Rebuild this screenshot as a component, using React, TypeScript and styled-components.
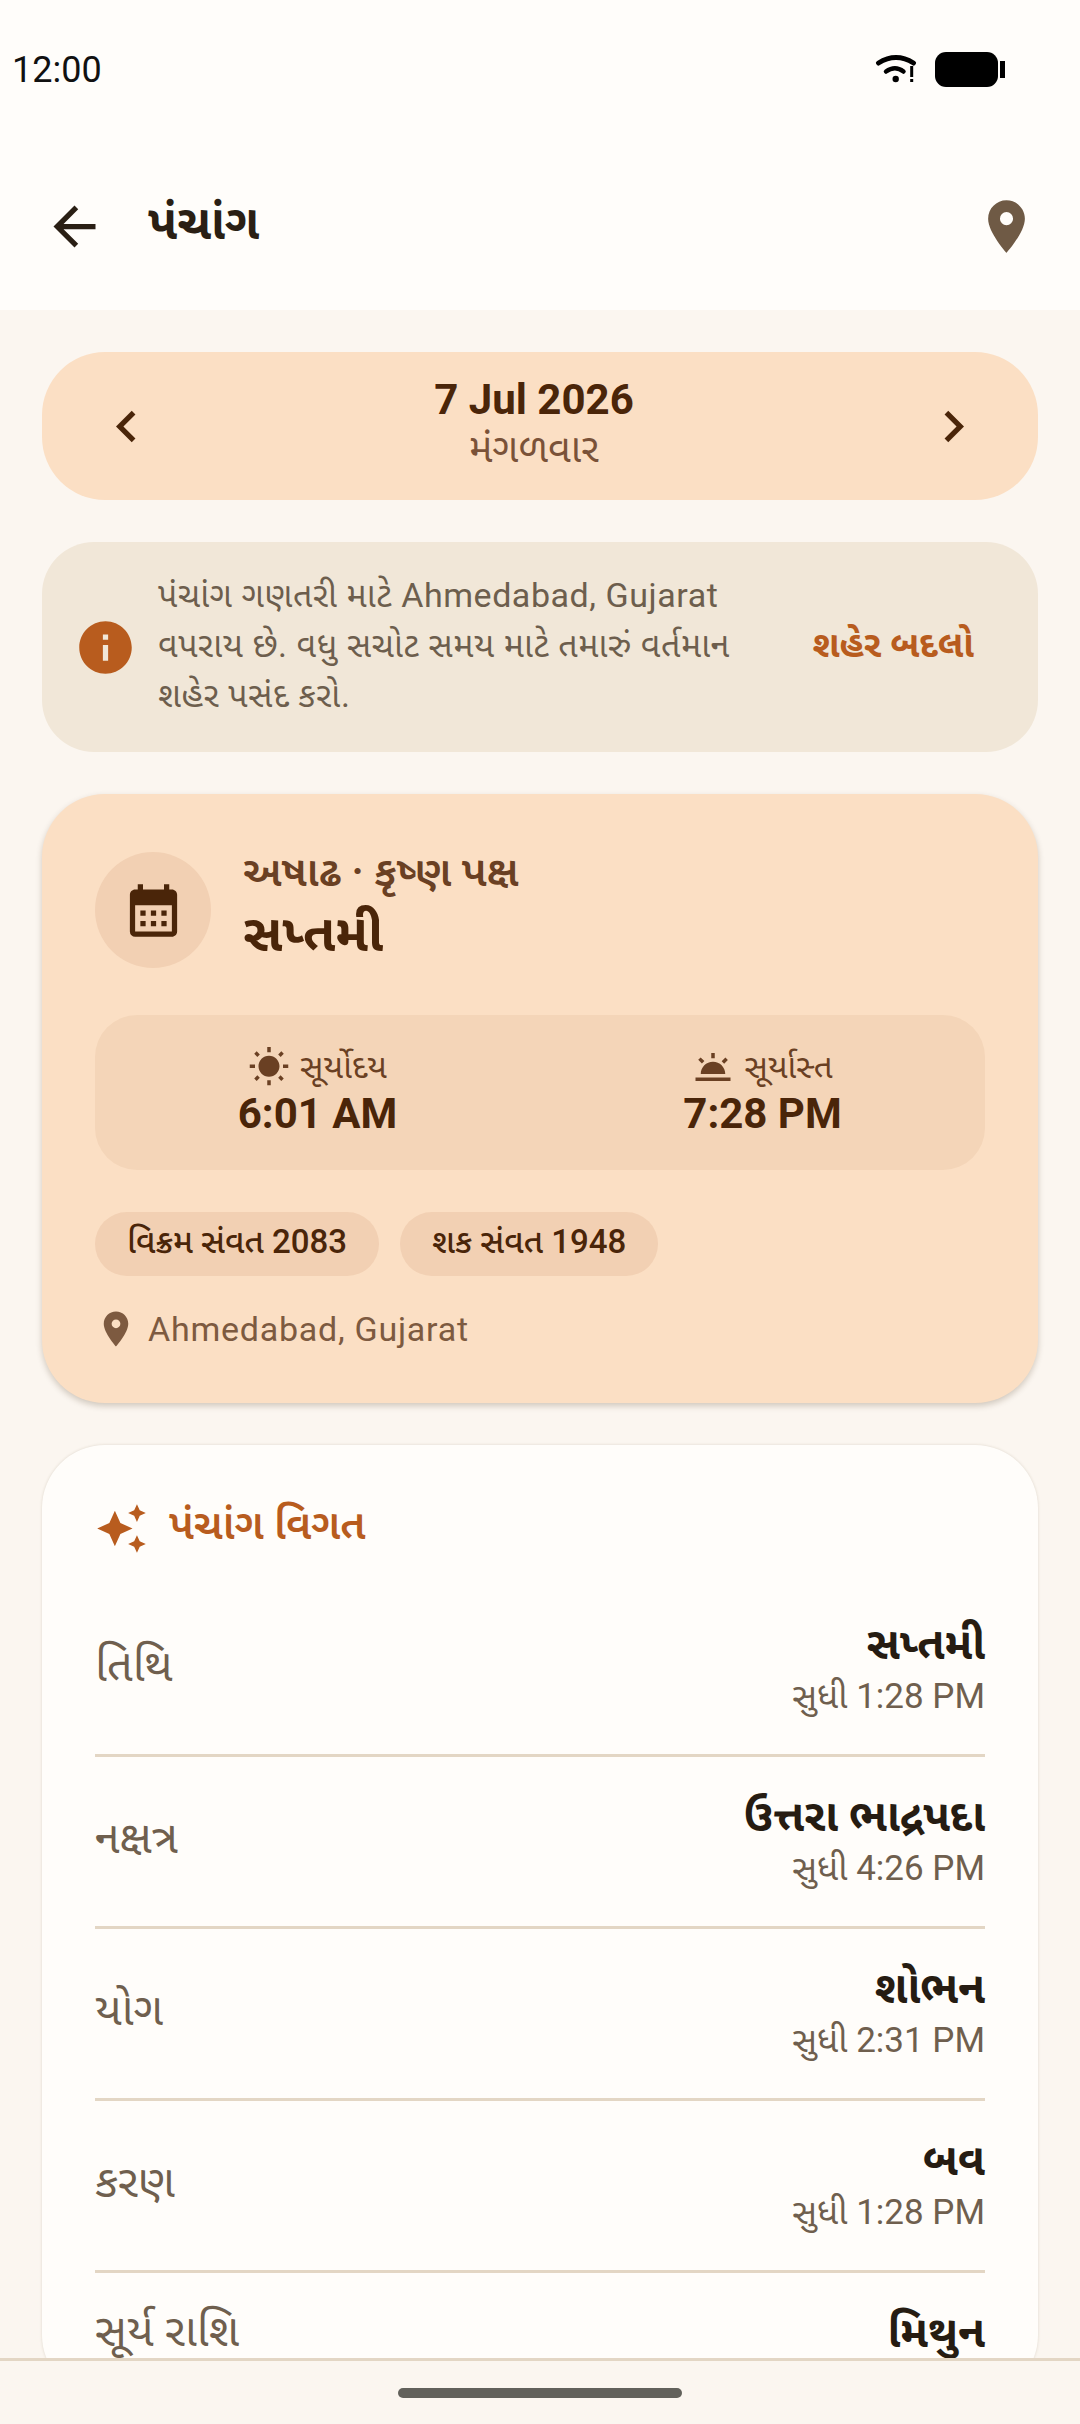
import React from 'react';
import styled, { createGlobalStyle } from 'styled-components';
import {
  MdArrowBack,
  MdLocationOn,
  MdChevronLeft,
  MdChevronRight,
  MdInfo,
  MdCalendarMonth,
  MdWbSunny,
  MdWbTwilight,
  MdAutoAwesome,
} from 'react-icons/md';

const FONT = `Roboto, "Noto Sans Gujarati", "Noto Sans", sans-serif`;

const GlobalStyle = createGlobalStyle`
  html, body {
    margin: 0;
    padding: 0;
    background: #fbf6f0;
    font-family: ${FONT};
  }
  * { box-sizing: border-box; }
`;

const Screen = styled.div`
  width: 1080px;
  height: 2424px;
  display: flex;
  flex-direction: column;
  overflow: hidden;
  background: #fbf6f0;
`;

const TopArea = styled.header`
  background: #fffdfa;
  height: 310px;
  flex: none;
`;

const StatusBar = styled.div`
  height: 142px;
  display: flex;
  align-items: flex-start;
  justify-content: space-between;
  padding: 50px 75px 0 12px;
`;

const Clock = styled.span`
  font-size: 36px;
  line-height: 40px;
  color: #111;
`;

const StatusIcons = styled.div`
  display: flex;
  align-items: flex-start;
  gap: 18px;
  margin-top: 2px;
`;

const AppBar = styled.div`
  height: 168px;
  display: flex;
  align-items: center;
  padding: 0 42px 0 43px;
`;

const BackIcon = styled(MdArrowBack)`
  width: 63px;
  height: 63px;
  color: #2a1f14;
  flex: none;
`;

const Title = styled.h1`
  margin: 0 0 0 42px;
  flex: 1;
  font-size: 48px;
  font-weight: 700;
  color: #2a1f14;
`;

const PinIcon = styled(MdLocationOn)`
  width: 63px;
  height: 63px;
  color: #6f5a45;
`;

const Content = styled.main`
  flex: 1;
  min-height: 0;
  overflow: hidden;
  padding: 42px;
  display: flex;
  flex-direction: column;
  gap: 42px;
`;

const DateCard = styled.section`
  flex: none;
  height: 148px;
  border-radius: 63px;
  background: #fbdfc4;
  display: flex;
  align-items: center;
  justify-content: space-between;
  padding: 0 53px;
`;

const Chevron = styled.span`
  display: flex;
  font-size: 63px;
  color: #4a2509;
`;

const DateText = styled.div`
  display: flex;
  flex-direction: column;
  align-items: center;
  margin-right: 12px;
  padding-bottom: 8px;
`;

const DateMain = styled.div`
  font-size: 42px;
  line-height: 52px;
  font-weight: 700;
  color: #4a2509;
`;

const DateSub = styled.div`
  margin-top: 1px;
  font-size: 39.5px;
  line-height: 44px;
  color: #7a5238;
`;

const InfoCard = styled.section`
  flex: none;
  height: 210px;
  border-radius: 52px;
  background: #f1e7d8;
  display: flex;
  align-items: center;
  padding: 0 42px 0 32px;
`;

const InfoIcon = styled(MdInfo)`
  width: 63px;
  height: 63px;
  color: #b85c1e;
  flex: none;
`;

const InfoText = styled.p`
  margin: 0 0 5px 21px;
  width: 600px;
  font-size: 34px;
  letter-spacing: 0.55px;
  line-height: 50px;
  color: #6d5e4d;
`;

const InfoAction = styled.span`
  margin-left: auto;
  margin-right: 22px;
  font-size: 36.5px;
  font-weight: 700;
  color: #b85c1e;
`;

const HeroCard = styled.section`
  flex: none;
  height: 609px;
  border-radius: 63px;
  background: #fbdfc4;
  padding: 58px 53px 0;
  box-shadow: 0 3px 6px rgba(60, 35, 10, 0.22);
`;

const HeroHead = styled.div`
  height: 116px;
  display: flex;
  align-items: center;
  gap: 32px;
`;

const HeroBadge = styled.div`
  width: 116px;
  height: 116px;
  border-radius: 50%;
  background: #f2d0b3;
  display: flex;
  align-items: center;
  justify-content: center;
  font-size: 63px;
  color: #4a2509;
`;

const HeroTitles = styled.div`
  padding-bottom: 6px;
`;

const HeroEyebrow = styled.div`
  font-size: 42px;
  line-height: 46px;
  font-weight: 600;
  color: #6a4023;
`;

const HeroName = styled.div`
  margin-top: 8px;
  font-size: 52px;
  line-height: 62px;
  font-weight: 700;
  color: #4a2509;
`;

const SunPanel = styled.div`
  margin-top: 47px;
  height: 155px;
  border-radius: 42px;
  background: #f4d5b8;
  display: grid;
  grid-template-columns: 1fr 1fr;
  align-items: center;
`;

const SunCell = styled.div`
  display: flex;
  flex-direction: column;
  align-items: center;
`;

const SunLabel = styled.div`
  display: flex;
  align-items: center;
  gap: 10px;
  font-size: 33px;
  line-height: 42px;
  color: #6a4023;
`;

const SunTime = styled.div`
  font-size: 42px;
  line-height: 52px;
  font-weight: 700;
  color: #4a2509;
`;

const ChipRow = styled.div`
  margin-top: 42px;
  display: flex;
  gap: 21px;
`;

const Chip = styled.span`
  height: 64px;
  padding: 0 32px;
  border-radius: 32px;
  background: #f2d0b3;
  display: flex;
  align-items: center;
  font-size: 33px;
  font-weight: 500;
  color: #4a2509;
`;

const PlaceRow = styled.div`
  margin-top: 32px;
  display: flex;
  align-items: center;
  gap: 11px;
  font-size: 34px;
  letter-spacing: 0.75px;
  color: #7d5a40;
`;

const DetailCard = styled.section`
  flex: none;
  border-radius: 63px;
  background: #fffdfa;
  box-shadow: 0 0 3px rgba(90, 70, 40, 0.18);
  padding: 53px 53px 0;
`;

const DetailHead = styled.div`
  display: flex;
  align-items: center;
  gap: 21px;
  height: 60px;
  margin-bottom: 27px;
  font-size: 42px;
  font-weight: 600;
  color: #b85c1e;
`;

const DetailRow = styled.div`
  padding: 30px 0 31px;
  display: flex;
  align-items: center;
  justify-content: space-between;
  border-bottom: 3px solid #e3d6c4;
`;

const RowLabel = styled.div`
  font-size: 45px;
  color: #6f5f4e;
`;

const RowValue = styled.div`
  display: flex;
  flex-direction: column;
  align-items: flex-end;
  padding-bottom: 3px;
`;

const RowTitle = styled.div`
  font-size: 44px;
  line-height: 58px;
  font-weight: 700;
  color: #261c12;
`;

const RowUntil = styled.div`
  margin-top: 1px;
  font-size: 35px;
  line-height: 46px;
  color: #6f5f4e;
`;

const NavBar = styled.footer`
  flex: none;
  height: 66px;
  background: #fbf6f0;
  border-top: 3px solid #e3d6c4;
  display: flex;
  justify-content: center;
  padding-top: 27px;
`;

const HomeHandle = styled.div`
  width: 284px;
  height: 10px;
  border-radius: 5px;
  background: #62615b;
`;

const rows = [
  { label: 'તિથિ', value: 'સપ્તમી', until: 'સુધી 1:28 PM' },
  { label: 'નક્ષત્ર', value: 'ઉત્તરા ભાદ્રપદા', until: 'સુધી 4:26 PM' },
  { label: 'યોગ', value: 'શોભન', until: 'સુધી 2:31 PM' },
  { label: 'કરણ', value: 'બવ', until: 'સુધી 1:28 PM' },
  { label: 'સૂર્ય રાશિ', value: 'મિથુન', until: '' },
];

const WifiIcon = () => (
  <svg width="44" height="32" viewBox="0 0 44 32" fill="none">
    <path d="M5.5 11 Q23 0 40.5 11" stroke="#000" strokeWidth="5" strokeLinecap="round" />
    <path d="M13 19.5 Q22 13 30.5 19.5" stroke="#000" strokeWidth="4.5" strokeLinecap="round" />
    <circle cx="22.7" cy="27" r="3.2" fill="#000" />
    <rect x="37.2" y="14" width="3" height="11" fill="#000" />
    <rect x="37.2" y="27" width="3" height="3" fill="#000" />
  </svg>
);

const BatteryIcon = () => (
  <svg width="70" height="36" viewBox="0 0 70 36">
    <rect x="0" y="0" width="63" height="35" rx="11" fill="#000" />
    <rect x="65" y="9" width="5" height="17" fill="#000" />
  </svg>
);

const App: React.FC = () => {
  return (
    <Screen>
      <GlobalStyle />
      <TopArea>
        <StatusBar>
          <Clock>12:00</Clock>
          <StatusIcons>
            <WifiIcon />
            <BatteryIcon />
          </StatusIcons>
        </StatusBar>
        <AppBar>
          <BackIcon />
          <Title>પંચાંગ</Title>
          <PinIcon />
        </AppBar>
      </TopArea>

      <Content>
        <DateCard>
          <Chevron><MdChevronLeft /></Chevron>
          <DateText>
            <DateMain>7 Jul 2026</DateMain>
            <DateSub>મંગળવાર</DateSub>
          </DateText>
          <Chevron><MdChevronRight /></Chevron>
        </DateCard>

        <InfoCard>
          <InfoIcon />
          <InfoText>
            પંચાંગ ગણતરી માટે Ahmedabad, Gujarat વપરાય છે. વધુ સચોટ સમય માટે તમારું વર્તમાન શહેર પસંદ કરો.
          </InfoText>
          <InfoAction>શહેર બદલો</InfoAction>
        </InfoCard>

        <HeroCard>
          <HeroHead>
            <HeroBadge><MdCalendarMonth /></HeroBadge>
            <HeroTitles>
              <HeroEyebrow>અષાઢ · કૃષ્ણ પક્ષ</HeroEyebrow>
              <HeroName>સપ્તમી</HeroName>
            </HeroTitles>
          </HeroHead>
          <SunPanel>
            <SunCell>
              <SunLabel><MdWbSunny size={42} />સૂર્યોદય</SunLabel>
              <SunTime>6:01 AM</SunTime>
            </SunCell>
            <SunCell>
              <SunLabel><MdWbTwilight size={42} />સૂર્યાસ્ત</SunLabel>
              <SunTime>7:28 PM</SunTime>
            </SunCell>
          </SunPanel>
          <ChipRow>
            <Chip>વિક્રમ સંવત 2083</Chip>
            <Chip>શક સંવત 1948</Chip>
          </ChipRow>
          <PlaceRow><MdLocationOn size={42} />Ahmedabad, Gujarat</PlaceRow>
        </HeroCard>

        <DetailCard>
          <DetailHead><MdAutoAwesome size={53} />પંચાંગ વિગત</DetailHead>
          {rows.map((row) => (
            <DetailRow key={row.label}>
              <RowLabel>{row.label}</RowLabel>
              <RowValue>
                <RowTitle>{row.value}</RowTitle>
                {row.until && <RowUntil>{row.until}</RowUntil>}
              </RowValue>
            </DetailRow>
          ))}
        </DetailCard>
      </Content>

      <NavBar>
        <HomeHandle />
      </NavBar>
    </Screen>
  );
};

export default App;
